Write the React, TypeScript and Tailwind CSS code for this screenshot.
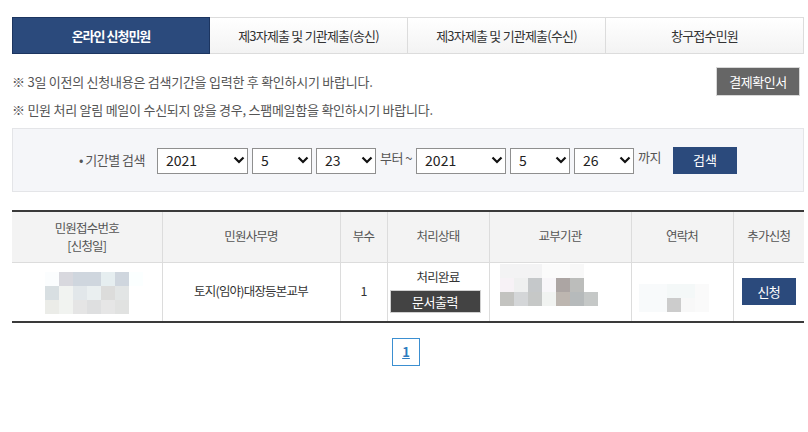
import { useState } from 'react';

const FONT = { fontFamily: '"Noto Sans CJK KR", "Noto Sans", sans-serif' };

const tabs = ['온라인 신청민원', '제3자제출 및 기관제출(송신)', '제3자제출 및 기관제출(수신)', '창구접수민원'];

// pixelated placeholders for the masked cells
const maskNo = [
  ['#fbfdfe', '#d8d8de', '#cfd6de', '#cfd6de', '#e6eef0', '#cfd6de', '#fbffff'],
  ['#d8dfe2', '#f1f3f1', '#e2e7ea', '#eaeff0', '#dcdcdb', '#e2e5e5', '#ffffff'],
  ['#ebece8', '#f1f3f0', '#e5e5e5', '#dedfe0', '#e6e6e6', '#e1e2e1', '#ffffff'],
];
const maskOrg = [
  ['#f3f3f4', '#f3f3f4', '#f3f3f4', '#fbfbfb', '#fbfbfb', '#f8f8f8', '#ffffff'],
  ['#f7f2f6', '#eff0f0', '#c5c8ca', '#f8f6f9', '#aca5a3', '#bcbdbb', '#ffffff'],
  ['#c3c3c0', '#d4d6d8', '#c6c8c7', '#f1f3f1', '#bdb6b0', '#b6babb', '#c5c8c7'],
];
const maskTel = [
  ['#ffffff', '#ffffff', '#ffffff', '#ffffff', '#ffffff', '#ffffff'],
  ['#f8fafb', '#f8fafb', '#f4f8f8', '#f4f8f8', '#fafafa', '#ffffff'],
  ['#f8fafb', '#f8fafb', '#cccccc', '#f8f8f8', '#fafafa', '#ffffff'],
];

function Mosaic({ grid }: { grid: string[][] }) {
  return (
    <div className="flex flex-col">
      {grid.map((row, i) => (
        <div key={i} className="flex">
          {row.map((c, j) => (
            <div key={j} className="w-[14px] h-[14px]" style={{ backgroundColor: c }} />
          ))}
        </div>
      ))}
    </div>
  );
}

function Select({ value, options, width }: { value: string; options: string[]; width: string }) {
  const [v, setV] = useState(value);
  return (
    <div className={`relative h-[26px] ${width}`}>
      <select
        value={v}
        onChange={e => setV(e.target.value)}
        className="appearance-none w-full h-full border border-[#8f8f8f] bg-white pl-[8px] text-[14px] text-[#222] outline-none"
        style={FONT}
      >
        {options.map(o => (
          <option key={o}>{o}</option>
        ))}
      </select>
      <svg className="absolute right-[3px] top-[9px] pointer-events-none" width="12" height="8" viewBox="0 0 12 8">
        <polyline points="1.5,1.5 6,6 10.5,1.5" fill="none" stroke="#111" strokeWidth="2.2" />
      </svg>
    </div>
  );
}

const years = ['2019', '2020', '2021'];
const months = Array.from({ length: 12 }, (_, i) => String(i + 1));
const days = Array.from({ length: 31 }, (_, i) => String(i + 1));

function App() {
  const [active, setActive] = useState(0);

  return (
    <div className="w-[808px] h-[432px] bg-white pl-[12px] pr-[4px] pt-[17px]" style={FONT}>
      {/* tabs */}
      <div className="flex h-[37px]">
        {tabs.map((t, i) => (
          <button
            key={t}
            onClick={() => setActive(i)}
            className={
              i === active
                ? 'w-[198px] h-full bg-[#2b4a7c] border border-[#1c3560] text-white text-[13px] tracking-[-1px] font-bold'
                : 'flex-1 h-full border border-l-0 border-[#dcdcdc] bg-gradient-to-b from-white to-[#f3f3f3] text-[#333] text-[13px] tracking-[-0.8px]'
            }
          >
            {t}
          </button>
        ))}
      </div>

      {/* notices */}
      <div className="flex justify-between mt-[13px] text-[13px] tracking-[-0.25px] text-[#555]">
        <div className="flex flex-col gap-[10px] pt-[6px]">
          <p className="leading-[18px]">※ 3일 이전의 신청내용은 검색기간을 입력한 후 확인하시기 바랍니다.</p>
          <p className="leading-[18px]">※ 민원 처리 알림 메일이 수신되지 않을 경우, 스팸메일함을 확인하시기 바랍니다.</p>
        </div>
        <button className="w-[84px] h-[29px] mr-[4px] bg-[#666] border border-[#d8d8d8] text-white text-[13px] tracking-[-0.5px]">결제확인서</button>
      </div>

      {/* search box */}
      <div className="mt-[9px] h-[64px] bg-[#f5f6f9] border border-[#e4e5e8] flex items-center justify-center gap-[4px]">
        <span className="text-[13px] tracking-[-0.5px] text-[#555] mr-[8px]">• 기간별 검색</span>
        <Select value="2021" options={years} width="w-[91px]" />
        <Select value="5" options={months} width="w-[60px]" />
        <Select value="23" options={days} width="w-[60px]" />
        <span className="text-[13px] tracking-[-0.5px] text-[#555] -mt-[4px]">부터 ~</span>
        <Select value="2021" options={years} width="w-[90px]" />
        <Select value="5" options={months} width="w-[60px]" />
        <Select value="26" options={days} width="w-[60px]" />
        <span className="text-[13px] tracking-[-0.5px] text-[#555] -mt-[6px]">까지</span>
        <button className="ml-[8px] w-[64px] h-[27px] bg-[#2b4a7c] text-white text-[13px]">검색</button>
      </div>

      {/* result table */}
      <table className="mt-[18px] w-[792px] border-collapse text-[12.5px] tracking-[-0.8px] text-[#444] table-fixed">
        <colgroup>
          <col className="w-[150px]" />
          <col className="w-[178px]" />
          <col className="w-[47px]" />
          <col className="w-[102px]" />
          <col className="w-[142px]" />
          <col className="w-[102px]" />
          <col className="w-[71px]" />
        </colgroup>
        <thead>
          <tr className="h-[51px] bg-[#f3f3f3] border-t-2 border-[#3a3a3a] text-[#555]">
            <th className="font-normal border-r border-[#dcdcdc] leading-[18px]">
              민원접수번호<br />[신청일]
            </th>
            <th className="font-normal border-r border-[#dcdcdc]">민원사무명</th>
            <th className="font-normal border-r border-[#dcdcdc]">부수</th>
            <th className="font-normal border-r border-[#dcdcdc]">처리상태</th>
            <th className="font-normal border-r border-[#dcdcdc]">교부기관</th>
            <th className="font-normal border-r border-[#dcdcdc]">연락처</th>
            <th className="font-normal">추가신청</th>
          </tr>
        </thead>
        <tbody>
          <tr className="h-[60px] border-t border-b-2 border-t-[#dcdcdc] border-b-[#3a3a3a]">
            <td className="border-r border-[#dcdcdc]">
              <div className="flex justify-center pl-[14px] pt-[2px]">
                <Mosaic grid={maskNo} />
              </div>
            </td>
            <td className="border-r border-[#dcdcdc] text-center text-[#333]">토지(임야)대장등본교부</td>
            <td className="border-r border-[#dcdcdc] text-center text-[#333]">1</td>
            <td className="border-r border-[#dcdcdc] text-center text-[#333]">
              <div className="flex flex-col items-center">
                <span className="leading-[18px] -mt-[2px]">처리완료</span>
                <button className="mt-[4px] -ml-[6px] w-[91px] h-[23px] bg-[#434343] border border-[#d0d0d0] text-white text-[13px] tracking-[-0.5px]">
                  문서출력
                </button>
              </div>
            </td>
            <td className="border-r border-[#dcdcdc]">
              <div className="flex pl-[10px] -mt-[14px]">
                <Mosaic grid={maskOrg} />
              </div>
            </td>
            <td className="border-r border-[#dcdcdc]">
              <div className="flex pl-[7px] -mt-[2px]">
                <Mosaic grid={maskTel} />
              </div>
            </td>
            <td className="text-center">
              <button className="w-[54px] h-[27px] bg-[#2b4a7c] text-white text-[13px]">신청</button>
            </td>
          </tr>
        </tbody>
      </table>

      {/* paging */}
      <div className="flex justify-center mt-[15px] pr-[4px]">
        <a className="w-[28px] h-[28px] border border-[#3b8fd1] flex items-center justify-center text-[#2d7cc0] font-bold text-[13px] underline">
          1
        </a>
      </div>
    </div>
  );
}

export default App;
